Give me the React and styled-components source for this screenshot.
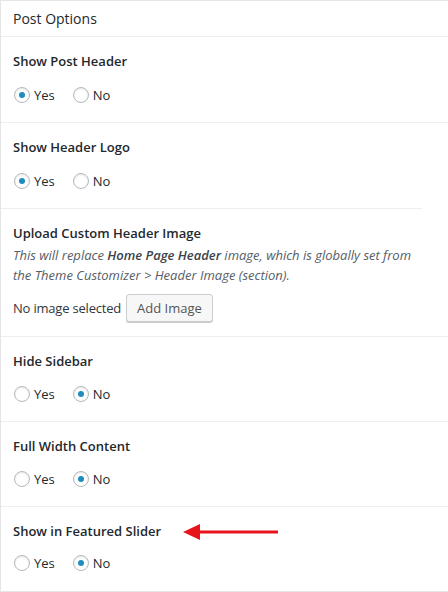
import React from "react";
import styled, { createGlobalStyle } from "styled-components";

const Global = createGlobalStyle`
  html, body { margin: 0; padding: 0; background: #fff; }
  body {
    font-family: "Open Sans", "Noto Sans", sans-serif;
    color: #23282d;
    overflow: hidden;
  }
  * { box-sizing: border-box; }
`;

const Panel = styled.div`
  width: 449px;
  border: 1px solid #e5e5e5;
  border-right: none;
  background: #fff;
`;

const Header = styled.div`
  height: 36px;
  display: flex;
  align-items: center;
  padding: 0 12px 0;
  border-bottom: 1px solid #eee;
  font-size: 14px;
  color: #23282d;
`;

const Section = styled.div`
  position: relative;
  padding: 14px 12px ${(p) => p.$bottom ?? 17}px;
`;

const Rule = styled.div`
  height: 1px;
  background: #eee;
  width: ${(p) => (p.$short ? "421px" : "100%")};
`;

const Label = styled.div`
  font-size: 13px;
  font-weight: 600;
  line-height: 20px;
  height: 20px;
  color: #23282d;
`;

const Desc = styled.div`
  margin-top: 2px;
  max-width: 404px;
  font-size: 13px;
  font-style: italic;
  line-height: 20px;
  color: #555d66;
  b { font-weight: 600; color: #3c434a; }
`;

const Options = styled.div`
  margin-top: ${(p) => p.$top ?? 14}px;
  height: 20px;
  display: flex;
  align-items: center;
  gap: 17px;
`;

const Option = styled.label`
  display: flex;
  align-items: center;
  gap: 4px;
  font-size: 13px;
  color: #23282d;
  line-height: 20px;
`;

const Radio = styled.span`
  width: 16px;
  height: 16px;
  margin-left: 1px;
  border-radius: 50%;
  border: 1px solid #b4b9be;
  background: #fff;
  box-shadow: inset 0 1px 2px rgba(0, 0, 0, 0.1);
  display: flex;
  align-items: center;
  justify-content: center;
  &::after {
    content: "";
    display: ${(p) => (p.$checked ? "block" : "none")};
    width: 6px;
    height: 6px;
    border-radius: 50%;
    background: #1e8cbe;
  }
`;

const UploadRow = styled.div`
  margin-top: 9px;
  height: 28px;
  display: flex;
  align-items: center;
  gap: 5px;
  font-size: 13px;
  color: #32373c;
  letter-spacing: -0.2px;
`;

const Button = styled.button`
  height: 28px;
  padding: 0 10px 1px;
  border: 1px solid #ccc;
  border-radius: 3px;
  background: #f7f7f7;
  box-shadow: 0 1px 0 #ccc;
  color: #555;
  font-family: inherit;
  font-size: 13px;
  line-height: 26px;
  letter-spacing: 0;
  cursor: pointer;
`;

const Arrow = styled.svg`
  position: absolute;
  left: 181px;
  top: 16px;
`;

function RadioGroup({ value, top }) {
  return (
    <Options $top={top}>
      <Option>
        <Radio $checked={value === "yes"} />
        Yes
      </Option>
      <Option>
        <Radio $checked={value === "no"} />
        No
      </Option>
    </Options>
  );
}

export default function App() {
  return (
    <>
      <Global />
      <Panel>
        <Header>Post Options</Header>
        <Section>
          <Label>Show Post Header</Label>
          <RadioGroup value="yes" />
        </Section>
        <Rule />
        <Section>
          <Label>Show Header Logo</Label>
          <RadioGroup value="yes" />
        </Section>
        <Rule $short />
        <Section $bottom={14}>
          <Label>Upload Custom Header Image</Label>
          <Desc>
            This will replace <b>Home Page Header</b> image, which is globally set from
            the Theme Customizer &gt; Header Image (section).
          </Desc>
          <UploadRow>
            <span>No image selected</span>
            <Button>Add Image</Button>
          </UploadRow>
        </Section>
        <Rule />
        <Section>
          <Label>Hide Sidebar</Label>
          <RadioGroup value="no" top={13} />
        </Section>
        <Rule />
        <Section>
          <Label>Full Width Content</Label>
          <RadioGroup value="no" top={13} />
        </Section>
        <Rule />
        <Section $bottom={18}>
          <Label>Show in Featured Slider</Label>
          <RadioGroup value="no" top={12} />
          <Arrow width="98" height="18" viewBox="0 0 98 18">
            <polygon points="1,9 18,1 18,17" fill="#e8141b" />
            <rect x="16" y="7.5" width="80" height="3" fill="#e8141b" />
          </Arrow>
        </Section>
      </Panel>
    </>
  );
}
